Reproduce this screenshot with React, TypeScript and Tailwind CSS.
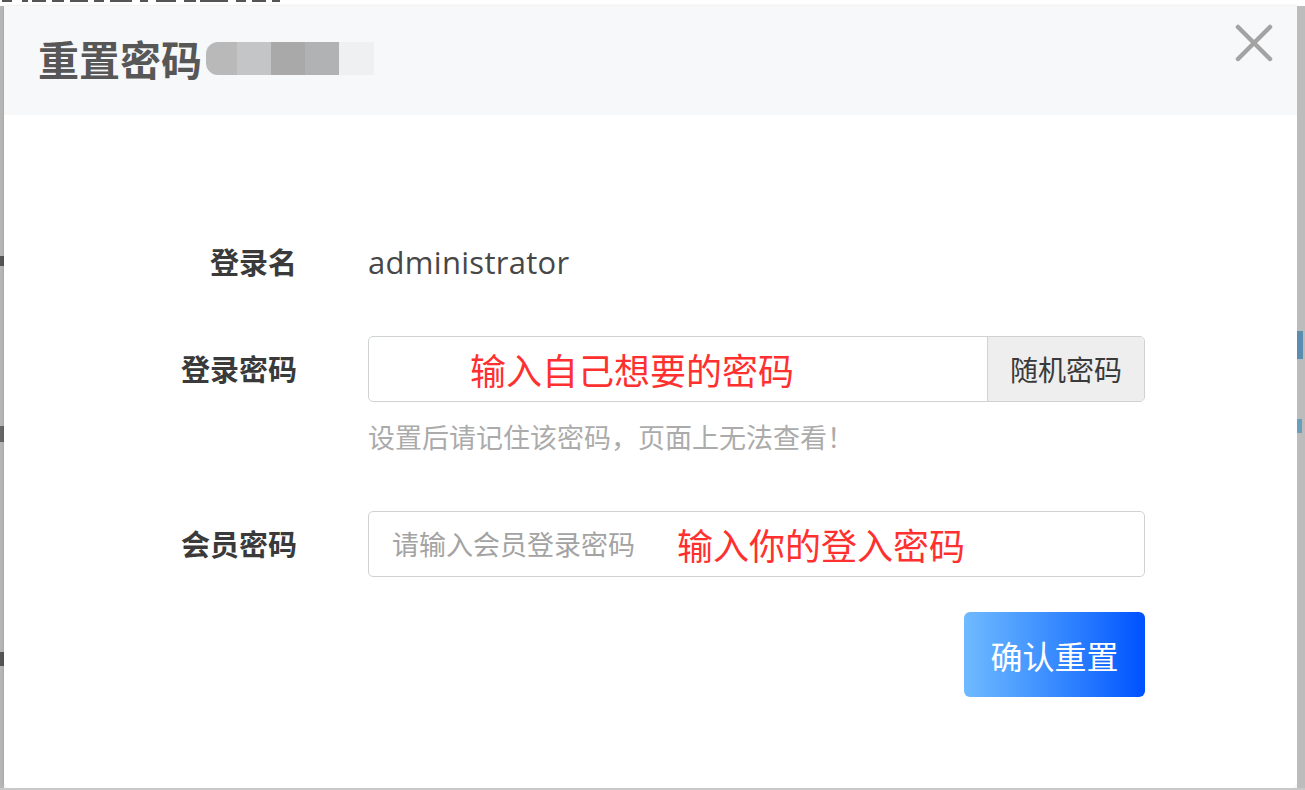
import React from "react";

const cjk = "font-['Microsoft_YaHei','Noto_Sans_CJK_SC',sans-serif]";

function CloseIcon() {
  return (
    <svg width="38" height="38" viewBox="0 0 38 38" fill="none">
      <path d="M3 3L35 35M35 3L3 35" stroke="#a3a3a3" strokeWidth="4.5" strokeLinecap="round" />
    </svg>
  );
}

// bottoms of the cut-off text line of the page behind the dialog
const topMarks = [
  [2, 10], [22, 6], [32, 14], [52, 12], [70, 18], [94, 10], [110, 22], [140, 8], [156, 20],
  [184, 12], [200, 28], [236, 10], [252, 14], [272, 8],
];

export default function App() {
  return (
    <div className={`w-[1305px] h-[790px] flex flex-col bg-white overflow-hidden ${cjk}`}>
      {/* top strip of the page behind, mostly cut off */}
      <div className="h-[6px] flex items-start bg-white">
        {topMarks.map(([x, w], i) => (
          <div key={i} className="h-[2px] bg-[#555] shrink-0" style={{ marginLeft: i === 0 ? x : x - topMarks[i - 1][0] - topMarks[i - 1][1], width: w }} />
        ))}
      </div>

      <div className="flex-1 flex min-h-0">
        {/* dimmed page left */}
        <div className="w-[4px] bg-[#b6b6b6] flex flex-col">
          <div className="h-[250px]" />
          <div className="h-[10px] bg-[#555]" />
          <div className="h-[160px]" />
          <div className="h-[16px] bg-[#666]" />
          <div className="h-[210px]" />
          <div className="h-[14px] bg-[#555]" />
        </div>

        {/* dialog */}
        <div className="flex-1 flex flex-col bg-white rounded-b-[6px] shadow-[0_0_3px_rgba(0,0,0,0.15)]">
          {/* header */}
          <div className="h-[109px] bg-[#f7f8fa] flex items-start justify-between pl-[34px] pr-[24px]">
            <div className="flex items-center mt-[28px]">
              <span className="text-[41px] leading-[48px] font-bold text-[#575757]">重置密码</span>
              <div className="flex ml-[4px] h-[33px]">
                <div className="w-[31px] bg-[#b9b9b9] rounded-l-[12px]" />
                <div className="w-[34px] bg-[#c3c5c7]" />
                <div className="w-[34px] bg-[#a9a9a9]" />
                <div className="w-[34px] bg-[#b1b2b4]" />
                <div className="w-[35px] bg-[#eef0f2]" />
              </div>
            </div>
            <button className="mt-[18px]">
              <CloseIcon />
            </button>
          </div>

          {/* body */}
          <div className="flex-1 pt-[114px]">
            <div className="grid grid-cols-[293px_777px] gap-x-[71px]">
              {/* row 1 */}
              <div className="h-[66px] flex items-center justify-end text-[29px] font-bold text-[#3a3a3a]">登录名</div>
              <div className="h-[66px] flex items-center text-[31px] tracking-[0.3px] text-[#474747] font-['Open_Sans',sans-serif]">administrator</div>

              {/* row 2 */}
              <div className="mt-[41px] h-[66px] flex items-center justify-end text-[29px] font-bold text-[#3a3a3a]">登录密码</div>
              <div className="mt-[41px] flex flex-col">
                <div className="h-[66px] flex border border-[#cfd2d5] rounded-[5px] overflow-hidden">
                  <div className="flex-1 flex items-center pl-[101px] text-[36px] text-[#ff3030]">输入自己想要的密码</div>
                  <div className="w-[157px] flex items-center justify-center bg-[#eeeeee] border-l border-[#cfd2d5] text-[28px] text-[#3a3a3a]">随机密码</div>
                </div>
                <div className="mt-[17px] text-[27px] leading-[36px] text-[#ababab]">设置后请记住该密码，页面上无法查看！</div>
              </div>

              {/* row 3 */}
              <div className="mt-[56px] h-[66px] flex items-center justify-end text-[29px] font-bold text-[#3a3a3a]">会员密码</div>
              <div className="mt-[56px] h-[66px] flex items-center border border-[#cfd2d5] rounded-[5px] pl-[23px]">
                <span className="text-[27px] text-[#a3a3a3]">请输入会员登录密码</span>
                <span className="ml-[42px] text-[36px] text-[#ff3030]">输入你的登入密码</span>
              </div>

              {/* actions */}
              <div />
              <div className="mt-[35px] flex justify-end">
                <button className="w-[181px] h-[85px] rounded-[6px] bg-gradient-to-r from-[#6fbaff] to-[#0050ff] text-white text-[32px]">
                  确认重置
                </button>
              </div>
            </div>
          </div>
        </div>

        {/* dimmed page right */}
        <div className="w-[8px] bg-[#bcbcbc] flex flex-col">
          <div className="h-[325px]" />
          <div className="h-[28px] w-[6px] bg-[#5a8db0]" />
          <div className="h-[60px]" />
          <div className="h-[14px] w-[5px] bg-[#6d9dbd]" />
        </div>
      </div>
      <div className="h-[2px] bg-[#c8c8c8]" />
    </div>
  );
}
